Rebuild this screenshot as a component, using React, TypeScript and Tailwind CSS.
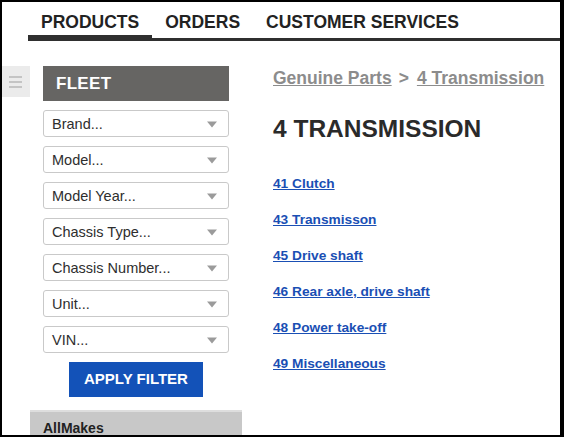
const filters = [
  'Brand...',
  'Model...',
  'Model Year...',
  'Chassis Type...',
  'Chassis Number...',
  'Unit...',
  'VIN...',
]

const parts = [
  '41 Clutch',
  '43 Transmisson',
  '45 Drive shaft',
  '46 Rear axle, drive shaft',
  '48 Power take-off',
  '49 Miscellaneous',
]

function SelectBox({ label }: { label: string }) {
  return (
    <div className="flex h-[27px] items-center justify-between rounded-[3px] border border-[#c9c9c9] bg-white pl-[8px] pr-[11px] pt-[1px]">
      <span className="text-[14.5px] leading-[17px] text-[#2e2e2e]">{label}</span>
      <svg width="10" height="7" viewBox="0 0 10 7">
        <path d="M0 0.5 L10 0.5 L5 6.5 Z" fill="#9b9b9b" />
      </svg>
    </div>
  )
}

export default function App() {
  return (
    <div
      className="h-[437px] w-[564px] overflow-hidden border-t-2 border-l-2 border-r-4 border-b-2 border-black bg-white"
      style={{ fontFamily: '"Liberation Sans", Arial, sans-serif' }}
    >
      {/* top nav */}
      <div className="flex items-end pl-[26px]">
        <a className="border-b-[6px] border-[#2f2f2f] px-[13px] pt-[10px] pb-[3px] text-[17.5px] font-bold leading-[20px] text-[#222]">
          PRODUCTS
        </a>
        <a className="border-b-[3px] border-[#2f2f2f] px-[13px] pt-[10px] pb-[6px] text-[17.5px] font-bold leading-[20px] text-[#222]">
          ORDERS
        </a>
        <a className="border-b-[3px] border-[#2f2f2f] px-[13px] pt-[10px] pb-[6px] text-[17.5px] font-bold leading-[20px] text-[#222]">
          CUSTOMER SERVICES
        </a>
        <div className="flex-1 border-b-[3px] border-[#2f2f2f]" />
      </div>

      <div className="mt-[25px] flex items-start">
        {/* menu toggle */}
        <div className="flex h-[31px] w-[28px] flex-col items-center justify-center gap-[3px] bg-[#ebebeb] pr-[2px]">
          <span className="h-[2px] w-[13px] bg-[#c4c4c4]" />
          <span className="h-[2px] w-[13px] bg-[#c4c4c4]" />
          <span className="h-[2px] w-[13px] bg-[#c4c4c4]" />
        </div>

        {/* sidebar */}
        <div className="flex w-[212px] flex-col">
          <div className="flex flex-col gap-[9px] px-[13px]">
            <div className="flex h-[35px] items-center bg-[#666563] pl-[13px]">
              <span className="text-[17px] font-bold tracking-[0.3px] text-white">FLEET</span>
            </div>
            {filters.map((f) => (
              <SelectBox key={f} label={f} />
            ))}
            <div className="flex justify-center">
              <button className="h-[35px] w-[134px] bg-[#1352b8] text-[15px] font-bold text-white">
                APPLY FILTER
              </button>
            </div>
          </div>
          <div className="mt-[13px] h-[30px] border-t-2 border-[#dedede] bg-[#c8c8c8] pl-[13px] pt-[4px]">
            <span className="text-[14px] font-bold leading-[16px] text-[#222]">AllMakes</span>
          </div>
        </div>

        {/* main content */}
        <div className="flex flex-col pl-[31px]">
          <div className="mt-[2px] flex items-center text-[17.5px] font-bold leading-[20px] text-[#8c8c8c]">
            <a className="underline">Genuine Parts</a>
            <span className="ml-[7px] mr-[8px]">&gt;</span>
            <a className="underline">4 Transmission</a>
          </div>
          <h1 className="mt-[27px] text-[24.5px] font-bold leading-[28px] text-[#2a2a2a]">4 TRANSMISSION</h1>
          <div className="mt-[33px] flex flex-col gap-[20px]">
            {parts.map((p) => (
              <a key={p} className="text-[13.7px] font-bold leading-[16px] text-[#1a4fb4] underline">
                {p}
              </a>
            ))}
          </div>
        </div>
      </div>
    </div>
  )
}
